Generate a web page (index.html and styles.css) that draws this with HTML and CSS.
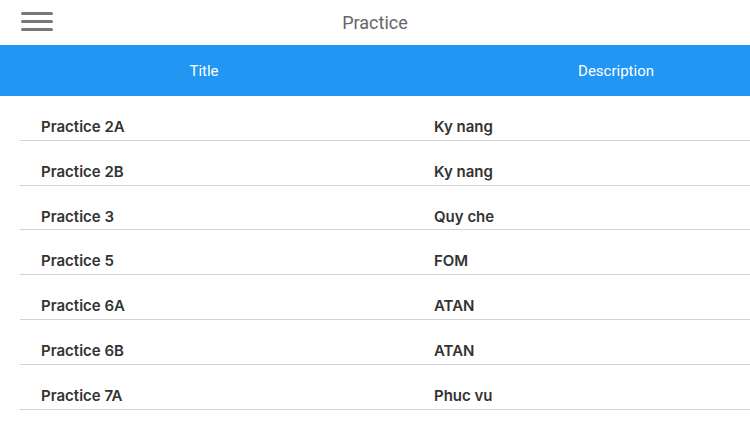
FILE: index.html
```html
<!DOCTYPE html>
<html lang="en">
<head>
    <meta charset="UTF-8">
    <meta name="viewport" content="width=device-width, initial-scale=1.0">
    <title>Practice</title>
    <link rel="stylesheet" href="styles.css">
</head>
<body>
    <header class="topbar">
        <div class="menu-btn">
            <svg viewBox="0 0 32 20" width="32" height="20">
                <rect x="0" y="0" width="32" height="3" rx="1.5" fill="#777" />
                <rect x="0" y="8" width="32" height="3" rx="1.5" fill="#777" />
                <rect x="0" y="16" width="32" height="3" rx="1.5" fill="#777" />
            </svg>
        </div>
        <h1 class="page-title">Practice</h1>
    </header>

    <div class="table-head">
        <div class="head-cell">Title</div>
        <div class="head-cell">Description</div>
    </div>

    <!-- Lista de practicas -->
    <ul class="rows">
        <li class="row"><span class="cell">Practice 2A</span><span class="cell">Ky nang</span></li>
        <li class="row"><span class="cell">Practice 2B</span><span class="cell">Ky nang</span></li>
        <li class="row"><span class="cell">Practice 3</span><span class="cell">Quy che</span></li>
        <li class="row"><span class="cell">Practice 5</span><span class="cell">FOM</span></li>
        <li class="row"><span class="cell">Practice 6A</span><span class="cell">ATAN</span></li>
        <li class="row"><span class="cell">Practice 6B</span><span class="cell">ATAN</span></li>
        <li class="row"><span class="cell">Practice 7A</span><span class="cell">Phuc vu</span></li>
    </ul>
</body>
</html>
```

FILE: styles.css
```css
* {
    margin: 0;
    padding: 0;
    box-sizing: border-box;
}

body {
    background: #fff;
    font-family: Inter, Roboto, sans-serif;
    overflow: hidden;
    width: 750px;
}

.topbar {
    position: relative;
    height: 45px;
    display: flex;
    align-items: center;
    justify-content: center;
}

.menu-btn {
    position: absolute;
    left: 21px;
    top: 12px;
    width: 32px;
    height: 20px;
}

.menu-btn svg {
    display: block;
}

.page-title {
    font-family: Roboto, sans-serif;
    font-size: 18px;
    font-weight: 400;
    color: #666;
}

.table-head {
    display: grid;
    grid-template-columns: 408px 416px;
    height: 51px;
    background: #2196f3;
    overflow: hidden;
}

.head-cell {
    display: flex;
    align-items: center;
    justify-content: center;
    font-family: Roboto, sans-serif;
    font-size: 15px;
    color: #fff;
}

.rows {
    list-style: none;
    margin-left: 20px;
}

.row {
    display: grid;
    grid-template-columns: 393px 1fr;
    height: 44.8px;
    padding: 21px 0 0 21px;
    border-bottom: 1px solid #d2d2d2;
}

.cell {
    font-size: 15px;
    font-weight: 600;
    line-height: 20px;
    color: #333;
}
```
